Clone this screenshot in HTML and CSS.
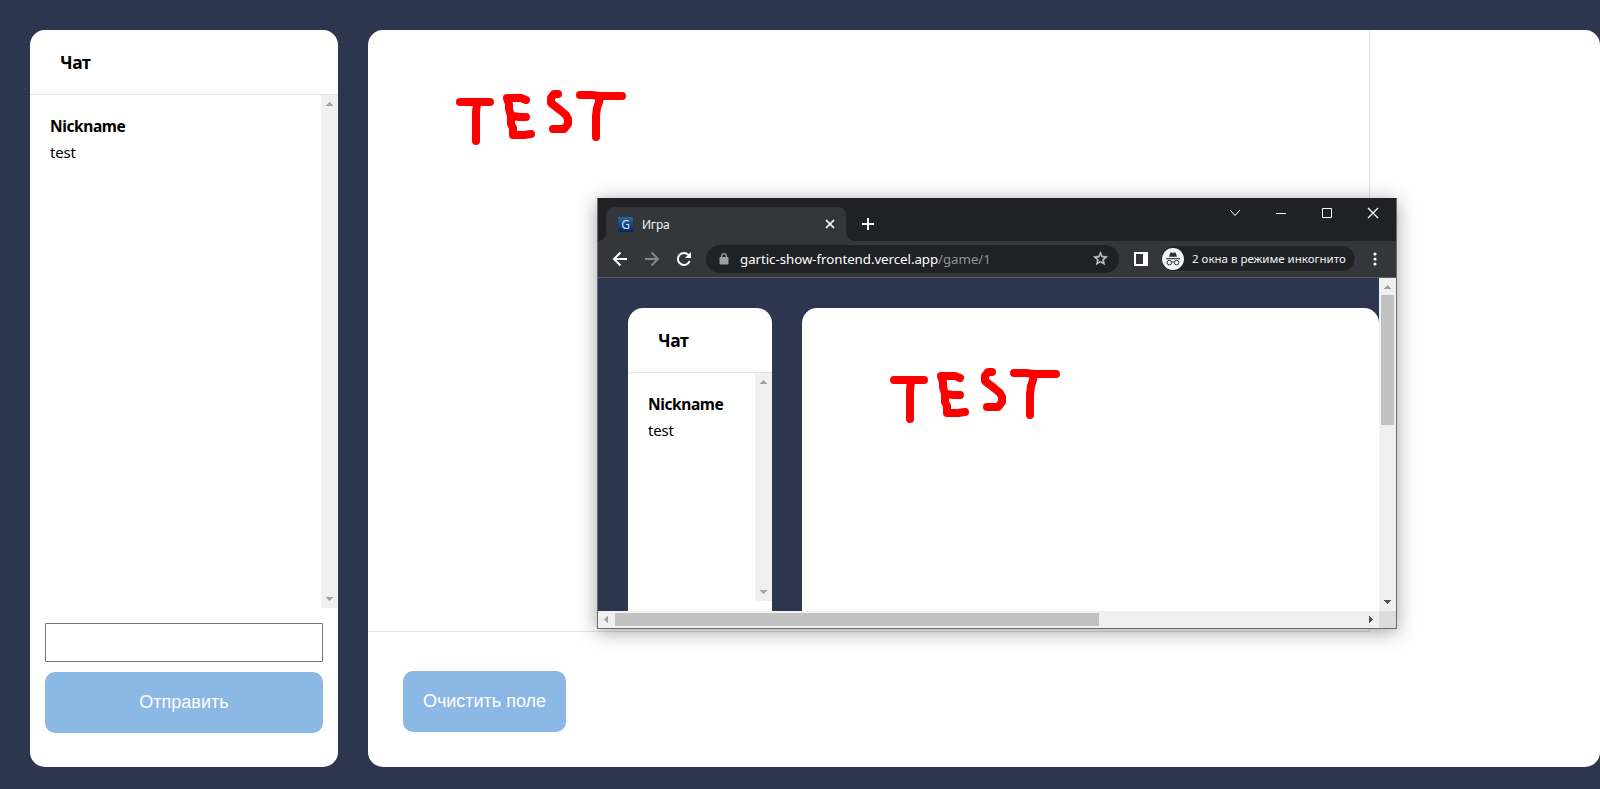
FILE: index.html
```html
<!DOCTYPE html>
<html lang="ru">
<head>
<meta charset="utf-8">
<title>Игра</title>
<link rel="stylesheet" href="styles.css">
</head>
<body>
<svg class="defs" width="0" height="0">
  <symbol id="drawing" viewBox="0 0 200 90">
    <g fill="none" stroke="#f00" stroke-width="8" stroke-linecap="round" stroke-linejoin="round">
      <path d="M20 32H50M37 34L36 42V71"/>
      <path d="M67 28H81L86 30M67 28L69 34V39L71 46V54L73 58V65H84L91 64M73 46L79 47H86"/>
      <path d="M118 24H114L111 28V33L120 40L126 45L128 49V54L124 59H113"/>
      <path d="M140 25H152L160 26H182M160 26L159 32L157 38L156 46V67"/>
    </g>
  </symbol>
</svg>

<main class="page">
  <section class="chat">
    <h2 class="chat-title">Чат</h2>
    <div class="chat-body">
      <div class="messages">
        <div class="nick">Nickname</div>
        <div class="msg">test</div>
      </div>
      <div class="bar">
        <svg class="arrow" viewBox="0 0 7 4"><path d="M0 4V3H1V2H2V1H3V0H4V1H5V2H6V3H7V4Z"/></svg>
        <svg class="arrow" viewBox="0 0 7 4"><path d="M0 0V1H1V2H2V3H3V4H4V3H5V2H6V1H7V0Z"/></svg>
      </div>
    </div>
    <form class="chat-form">
      <input class="field" type="text">
      <button class="btn btn-send" type="button">Отправить</button>
    </form>
  </section>
  <section class="board">
    <div class="canvas"><svg class="drawing"><use href="#drawing"/></svg></div>
    <button class="btn btn-clear" type="button">Очистить поле</button>
  </section>
</main>

<div class="window">
  <div class="tabs">
    <div class="tab">
      <span class="favicon">G</span>
      <span class="tab-name">Игра</span>
      <svg class="tab-close" width="10" height="10" viewBox="0 0 10 10"><path d="M1 1L9 9M9 1L1 9" stroke="#fff" stroke-width="1.7"/></svg>
    </div>
    <svg class="plus" width="12" height="12" viewBox="0 0 12 12"><path d="M6 0V12M0 6H12" stroke="#fff" stroke-width="2"/></svg>
    <div class="controls">
      <svg width="12" height="12" viewBox="0 0 12 12"><path d="M1 3L6 8.5L11 3"/></svg>
      <svg width="12" height="12" viewBox="0 0 12 12"><path d="M1 6.5H11"/></svg>
      <svg width="12" height="12" viewBox="0 0 12 12"><path d="M1.5 1.5H10.5V10.5H1.5Z"/></svg>
      <svg width="12" height="12" viewBox="0 0 12 12"><path d="M1 1L11 11M11 1L1 11" stroke-width="1.3"/></svg>
    </div>
  </div>
  <div class="toolbar">
    <svg class="nav" width="16" height="16" viewBox="0 0 16 16"><path d="M15 8H2.5M8.5 1.5L2 8L8.5 14.5" stroke="#fff"/></svg>
    <svg class="nav" width="16" height="16" viewBox="0 0 16 16"><path d="M1 8H13.5M7.5 1.5L14 8L7.5 14.5" stroke="#85868a"/></svg>
    <svg class="nav" width="16" height="16" viewBox="0 0 16 16"><path d="M13.6 10A6 6 0 1 1 12.3 3.8L13.8 5.3" stroke="#fff"/><path d="M15 1V7H9Z" fill="#fff"/></svg>
    <div class="omnibox">
      <svg width="10" height="12" viewBox="0 0 10 12"><path d="M1 4.5H9V11H1Z" fill="#9aa0a6" stroke="#9aa0a6" stroke-linejoin="round"/><path d="M2.7 5V3A2.3 2.3 0 0 1 7.3 3V5" fill="none" stroke="#9aa0a6" stroke-width="1.3"/></svg>
      <span class="url">gartic-show-frontend.vercel.app<span class="path">/game/1</span></span>
      <svg class="star" width="17" height="17" viewBox="0 0 24 24"><path d="M22 9.24l-7.19-.62L12 2 9.19 8.63 2 9.24l5.46 4.73L5.82 21 12 17.27 18.18 21l-1.63-7.03L22 9.24zM12 15.4l-3.76 2.27 1-4.28-3.32-2.88 4.38-.38L12 6.1l1.71 4.04 4.38.38-3.32 2.88 1 4.28L12 15.4z" fill="#c4c7cb" stroke="#c4c7cb" stroke-width=".6"/></svg>
    </div>
    <svg class="panel" width="14" height="14" viewBox="0 0 14 14"><path d="M0 0H14V14H0ZM2 2V12H9V2Z" fill="#fff" fill-rule="evenodd"/></svg>
    <div class="incognito">
      <svg width="22" height="22" viewBox="0 0 22 22">
        <circle cx="11" cy="11" r="11" fill="#f1f3f4"/>
        <path d="M7 8.7L8.4 4.5H9.5L11 5L12.5 4.5H13.6L15 8.7Z" fill="#303135"/>
        <path d="M4 10.7H18" stroke="#303135" stroke-width="1.1"/>
        <path d="M9.7 14.2Q11 13.4 12.3 14.2" fill="none" stroke="#303135"/>
        <circle cx="7.4" cy="14.6" r="2.3" fill="none" stroke="#303135"/>
        <circle cx="14.6" cy="14.6" r="2.3" fill="none" stroke="#303135"/>
      </svg>
      <span class="inc-text">2 окна в режиме инкогнито</span>
    </div>
    <svg class="dots" width="4" height="14" viewBox="0 0 4 14"><g fill="#fff"><circle cx="2" cy="2" r="1.6"/><circle cx="2" cy="7" r="1.6"/><circle cx="2" cy="12" r="1.6"/></g></svg>
  </div>
  <div class="view">
    <div class="view-page">
      <section class="chat chat-small">
        <h2 class="chat-title">Чат</h2>
        <div class="chat-body">
          <div class="messages">
            <div class="nick">Nickname</div>
            <div class="msg">test</div>
          </div>
          <div class="bar">
            <svg class="arrow" viewBox="0 0 7 4"><path d="M0 4V3H1V2H2V1H3V0H4V1H5V2H6V3H7V4Z"/></svg>
            <svg class="arrow" viewBox="0 0 7 4"><path d="M0 0V1H1V2H2V3H3V4H4V3H5V2H6V1H7V0Z"/></svg>
          </div>
        </div>
      </section>
      <section class="board board-small"><svg class="drawing"><use href="#drawing"/></svg></section>
    </div>
    <div class="bar bar-v">
      <svg class="arrow" viewBox="0 0 7 4"><path d="M0 4V3H1V2H2V1H3V0H4V1H5V2H6V3H7V4Z"/></svg>
      <div class="thumb-v"></div>
      <svg class="arrow dark" viewBox="0 0 7 4"><path d="M0 0V1H1V2H2V3H3V4H4V3H5V2H6V1H7V0Z"/></svg>
    </div>
    <div class="bar-h">
      <svg class="arrow-h" viewBox="0 0 4 7"><path d="M4 0H3V1H2V2H1V3H0V4H1V5H2V6H3V7H4Z"/></svg>
      <div class="thumb-h"></div>
      <svg class="arrow-h dark" viewBox="0 0 4 7"><path d="M0 0H1V1H2V2H3V3H4V4H3V5H2V6H1V7H0Z"/></svg>
    </div>
    <div class="corner"></div>
  </div>
</div>
</body>
</html>
```
FILE: styles.css
```css
* { box-sizing: border-box; }
body {
  margin: 0;
  height: 789px;
  overflow: hidden;
  background: #2c364e;
  color: #000;
  font-family: "Noto Sans", "Open Sans", sans-serif;
}
svg { display: block; flex: none; }
.defs { position: absolute; }

.page { display: flex; gap: 30px; padding: 30px 0 22px 30px; height: 789px; }

.chat {
  display: flex;
  flex-direction: column;
  flex: none;
  width: 308px;
  background: #fff;
  border-radius: 15px;
  overflow: hidden;
}
.chat-title {
  flex: none;
  margin: 0;
  height: 65px;
  padding-left: 30px;
  border-bottom: 1px solid #e2e2e2;
  font-size: 17.5px;
  line-height: 65px;
  letter-spacing: -0.4px;
}
.chat-body { display: flex; height: 513px; }
.messages { flex: 1; padding: 18px 0 0 20px; }
.nick { font-size: 15.5px; font-weight: 700; line-height: 26px; letter-spacing: -0.4px; }
.msg { font-size: 15px; line-height: 26px; letter-spacing: -0.2px; }

.bar {
  display: flex;
  flex-direction: column;
  justify-content: space-between;
  align-items: center;
  width: 17px;
  padding: 7px 0;
  background: #f0f0f0;
}
.arrow { width: 7px; height: 4px; fill: #a3a3a3; }
.arrow-h { width: 4px; height: 7px; fill: #a3a3a3; }
.dark { fill: #505050; }

.chat-form { display: flex; flex-direction: column; gap: 10px; padding: 15px 15px 0; }
.field { height: 39px; border: 1px solid #767676; border-radius: 1px; background: #fff; }
.btn {
  height: 61px;
  padding: 0;
  border: 0;
  border-radius: 10px;
  background: #8cb8e6;
  color: #fff;
  font: 18px "Liberation Sans", sans-serif;
}
.board { flex: 1; background: #fff; border-radius: 15px; overflow: hidden; }
.canvas {
  width: 1002px;
  height: 602px;
  padding: 40px 0 0 72px;
  border: solid #e2e2e2;
  border-width: 0 1px 1px 0;
}
.drawing { width: 200px; height: 90px; }
.btn-clear { display: block; width: 163px; margin: 39px 0 0 35px; }

/* The browser window floats above the page */
.window {
  position: absolute;
  left: 597px;
  top: 198px;
  width: 800px;
  height: 431px;
  border: 1px solid #6b6b6b;
  border-top-color: #202124;
  background: #35363a;
  box-shadow: 0 3px 18px rgba(0, 0, 0, .36);
}
.tabs { display: flex; height: 42px; padding-left: 8px; background: #202124; }
.tab {
  position: relative;
  display: flex;
  align-items: center;
  width: 240px;
  height: 34px;
  margin-top: 8px;
  padding: 0 11px 0 12px;
  border-radius: 8px 8px 0 0;
  background: #35363a;
}
.tab::before, .tab::after {
  content: "";
  position: absolute;
  bottom: 0;
  width: 8px;
  height: 8px;
}
.tab::before { left: -8px; background: radial-gradient(circle at 0 0, #202124 7.5px, #35363a 8px); }
.tab::after { right: -8px; background: radial-gradient(circle at 100% 0, #202124 7.5px, #35363a 8px); }
.favicon {
  width: 15px;
  height: 15px;
  background: linear-gradient(#28699f, #06245e);
  color: #d6e0eb;
  font-size: 12px;
  line-height: 15px;
  text-align: center;
}
.tab-name { margin-left: 9px; color: #f1f3f4; font-size: 12px; letter-spacing: -0.2px; }
.tab-close { margin-left: auto; }
.plus { margin: 19px 0 0 16px; }
.controls {
  display: flex;
  gap: 34px;
  margin: 8px 17px 0 auto;
  fill: none;
  stroke: #fff;
  stroke-width: 1;
}
.toolbar {
  display: flex;
  align-items: center;
  height: 37px;
  padding: 0 19px 1px 14px;
  border-bottom: 1px solid #5c5e5c;
}
.nav { margin-right: 16px; fill: none; stroke-width: 2; }
.omnibox {
  display: flex;
  align-items: center;
  width: 413px;
  height: 28px;
  padding: 0 10px 0 13px;
  margin-left: -2px;
  border-radius: 14px;
  background: #202124;
}
.url { margin-left: 11px; color: #fff; font-size: 13.3px; line-height: 28px; letter-spacing: -0.05px; white-space: nowrap; }
.path { color: #8f9296; }
.star { margin-left: auto; }
.panel { margin-left: 15px; }
.incognito {
  display: flex;
  align-items: center;
  width: 196px;
  height: 27px;
  margin-left: 12px;
  padding-left: 1px;
  border: 1px solid #3d3e42;
  border-radius: 14px;
  background: #202124;
}
.inc-text { margin-left: 8px; color: #f1f3f4; font-size: 11.5px; white-space: nowrap; }
.dots { margin-left: auto; }

.view { display: grid; grid-template: 333px 17px / 781px 17px; }
.view-page { display: flex; gap: 30px; padding: 30px 0 0 30px; background: #2c364e; overflow: hidden; }
.chat-small { width: 144px; border-radius: 15px 15px 0 0; }
.chat-small .chat-body { height: 228px; }
.board-small { padding: 40px 0 0 72px; border-radius: 15px 15px 0 0; }
.bar-v .thumb-v { width: 13px; height: 130px; margin: 6px 0 auto; background: #c1c1c1; }
.bar-h { display: flex; align-items: center; padding: 0 6px; background: #f0f0f0; }
.thumb-h { width: 484px; height: 13px; margin: 0 auto 0 7px; background: #c1c1c1; }
.corner { background: #dcdcdc; }
```
